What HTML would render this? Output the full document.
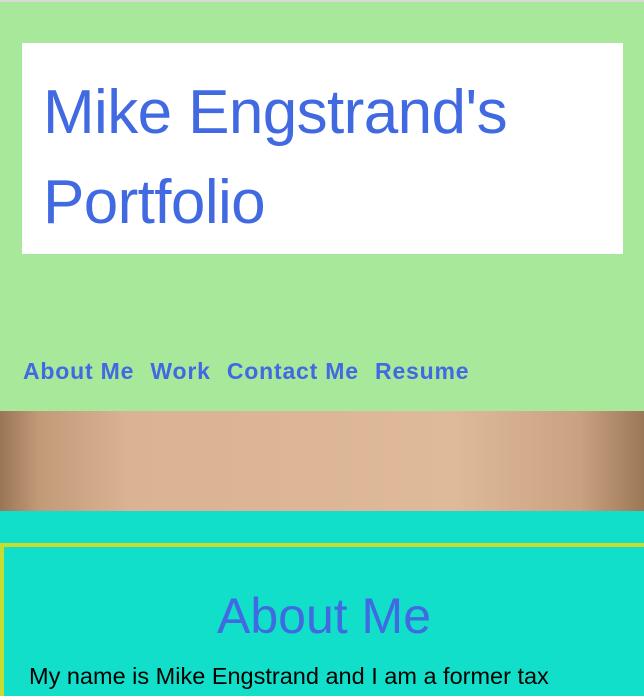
<!DOCTYPE html>
<html><head><style>
html,body{margin:0;width:644px;height:696px;overflow:hidden;}
body{background:#12dfca;font-family:"Liberation Sans",sans-serif;}
.top{height:2px;background:#d8d8d8}
header{background:#a8e89a;height:409px;position:relative}
.box{position:absolute;left:22px;top:41px;width:601px;height:211px;background:#fff}
.box h1{margin:0;padding:25px 0 0 21px;font-weight:normal;font-size:62px;line-height:90px;color:#4169e1;letter-spacing:-0.6px}
nav{position:absolute;left:23px;top:356px;font-weight:bold;font-size:23px;color:#4169e1;letter-spacing:0.8px;white-space:nowrap}
nav span{margin-right:9px}
.wood{height:100px;background:linear-gradient(90deg,#9a7555 0%,#c19a78 6%,#d9b393 20%,#dcb696 50%,#dfba9a 70%,#c9a281 90%,#9c7756 100%)}
.gap{height:32px}
section{border:4px solid #c4dd2f;border-right:0;border-bottom:0;height:149px;position:relative;overflow:hidden}
section h2{margin:0;position:absolute;top:40px;width:100%;text-align:center;font-weight:normal;font-size:50px;color:#4169e1}
section p{margin:0;position:absolute;left:25px;top:116px;font-size:23.5px;color:#000;white-space:nowrap}
</style></head><body>
<div class="top"></div>
<header><div class="box"><h1>Mike Engstrand's<br>Portfolio</h1></div>
<nav><span>About Me</span> <span>Work</span> <span>Contact Me</span> <span>Resume</span></nav></header>
<div class="wood"></div>
<div class="gap"></div>
<section><h2>About Me</h2><p>My name is Mike Engstrand and I am a former tax</p></section>
</body></html>
